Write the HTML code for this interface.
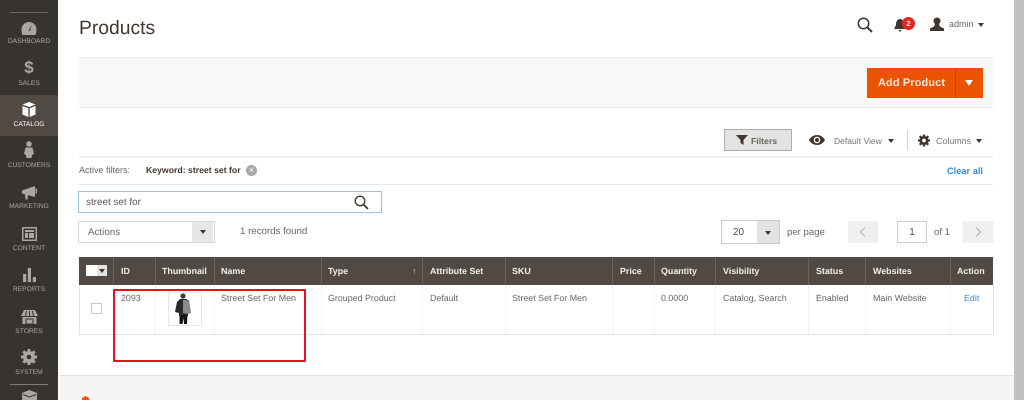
<!DOCTYPE html>
<html><head><meta charset="utf-8"><style>
html,body{margin:0;padding:0;background:#fff}
#p{position:relative;width:1024px;height:400px;overflow:hidden;background:#fff;font-family:"Liberation Sans",sans-serif;color:#41362f;text-rendering:geometricPrecision}
#p div,#p span,#p svg{position:absolute}
.t{white-space:nowrap;font-size:9px;line-height:12px;color:#514943}
.n{width:58px;left:0;text-align:center;font-size:6.7px;line-height:10px;color:#aaa6a0;white-space:nowrap}
.h{white-space:nowrap;font-size:8.9px;line-height:12px;font-weight:bold;color:#f1efec;top:265px}
.c{white-space:nowrap;font-size:8.9px;line-height:12px;color:#6b6560;top:292px}
.sep{top:257px;width:1px;height:28px;background:#6e6259}
.cs{top:285px;width:1px;height:49px;background:#f1f1f1}
.tri{width:0;height:0;border-left:3px solid transparent;border-right:3px solid transparent;border-top:4px solid #41362f}
</style></head><body><div id="p">
<!-- sidebar -->
<div style="left:0;top:0;width:58px;height:400px;background:#373330"></div>
<div style="left:0;top:95px;width:58px;height:41px;background:#514943"></div>
<div style="left:10px;top:12px;width:38px;height:1px;background:#6b6560"></div>
<div style="left:10px;top:384px;width:38px;height:1px;background:#807a74"></div>
<svg style="left:21px;top:22px" width="16" height="13" viewBox="0 0 16 13"><path d="M8 0A7.5 7.5 0 0 0 .5 8c0 2 .5 3.5 1 5h13c.5-1.500 1-3 1-5A7.500 7.500 0 0 0 8 0z" fill="#aaa6a0"/><path d="M11 3L7.500 8.500 8.800 9.300z" fill="#373330"/></svg>
<div class="n" style="top:37px">DASHBOARD</div>
<div style="left:0;width:58px;top:58px;text-align:center;font-size:17px;line-height:20px;font-weight:bold;color:#aaa6a0">$</div>
<div class="n" style="top:79px">SALES</div>
<svg style="left:22px;top:102px" width="14" height="15" viewBox="0 0 14 15"><path d="M7 0l6.500 2.500L7 5 .5 2.500z M.5 4L6.300 6.300V15L.5 12.500z M13.500 4L7.700 6.300V15l5.800-2.500z" fill="#fff"/></svg>
<div class="n" style="top:120px;color:#fff">CATALOG</div>
<svg style="left:24px;top:141px" width="10" height="17" viewBox="0 0 10 17"><circle cx="5" cy="3" r="2.800" fill="#aaa6a0"/><path d="M1.500 6.500h7L10 13l-2 1-.5 3h-5L2 14l-2-1z" fill="#aaa6a0"/></svg>
<div class="n" style="top:161px">CUSTOMERS</div>
<svg style="left:22px;top:186px" width="15" height="14" viewBox="0 0 15 14"><path d="M0 4.500L13 0v11L0 7.500z M3 8l3 1-.5 4.500H3.500z M13.500 2.500H15v5h-1.500z" fill="#aaa6a0"/></svg>
<div class="n" style="top:202px">MARKETING</div>
<svg style="left:22px;top:227px" width="15" height="14" viewBox="0 0 15 14"><path d="M0 0h15v14H0z M1.500 1.500v11h12v-11z M3 3h9v2H3z M3 6h3v5H3z M7 6h5v5H7z" fill="#aaa6a0" fill-rule="evenodd"/></svg>
<div class="n" style="top:244px">CONTENT</div>
<svg style="left:23px;top:268px" width="13" height="14" viewBox="0 0 13 14"><path d="M0 6h3.200v8H0z M4.800 0H8v14H4.800z M9.800 9H13v5H9.800z" fill="#aaa6a0"/></svg>
<div class="n" style="top:285px">REPORTS</div>
<svg style="left:21px;top:310px" width="17" height="14" viewBox="0 0 17 14"><path d="M3 0h11l3 6H0z M1.500 7h14v7h-14z" fill="#aaa6a0"/><path d="M5.500 1L4.500 6 M8.500 1v5 M11.500 1l1 5 M5 9h7v5H5z" stroke="#373330" fill="none"/></svg>
<div class="n" style="top:327px">STORES</div>
<svg style="left:21px;top:349px" width="16" height="16" viewBox="0 0 16 16"><circle cx="8" cy="8" r="4.500" fill="none" stroke="#aaa6a0" stroke-width="3"/><path d="M8 0v16M0 8h16M2.300 2.300l11.400 11.400M13.700 2.300L2.300 13.700" stroke="#aaa6a0" stroke-width="3"/><circle cx="8" cy="8" r="2.300" fill="#373330"/></svg>
<div class="n" style="top:368px">SYSTEM</div>
<svg style="left:22px;top:390px" width="15" height="10" viewBox="0 0 15 10"><path d="M7.500 0L15 3v7H0V3z" fill="#aaa6a0"/><path d="M1 4.500l6.500 2.500L14 4.500" stroke="#373330" fill="none"/></svg>

<!-- header -->
<div class="t" style="left:79px;top:16px;font-size:19.3px;line-height:26px;color:#41362f">Products</div>
<svg style="left:857px;top:17px" width="16" height="16" viewBox="0 0 16 16"><circle cx="6.500" cy="6.500" r="5.200" fill="none" stroke="#41362f" stroke-width="1.500"/><path d="M10.300 10.300L15 15" stroke="#41362f" stroke-width="2"/></svg>
<svg style="left:894px;top:19px" width="12" height="13" viewBox="0 0 12 13"><path d="M6 0C3 0 2 3 2 6L0 10h12L10 6c0-3-1-6-4-6z M4.500 11h3L6 13z" fill="#41362f"/></svg>
<div style="left:902px;top:17px;width:13px;height:13px;border-radius:50%;background:#e22626;color:#fff;font-size:7.500px;font-weight:bold;line-height:13px;text-align:center">2</div>
<svg style="left:930px;top:17px" width="14" height="14" viewBox="0 0 14 14"><circle cx="7" cy="4" r="3.500" fill="#41362f"/><path d="M5 7h4l1 2.500 4 2V14H0v-2.500l4-2z" fill="#41362f"/></svg>
<div class="t" style="left:949px;top:18px;color:#6b6560;font-size:9px">admin</div>
<div class="tri" style="left:978px;top:23px"></div>

<!-- action bar -->
<div style="left:79px;top:57px;width:914px;height:49px;background:#f8f8f8;border-top:1px solid #ececec;border-bottom:1px solid #ececec"></div>
<div style="left:867px;top:68px;width:116px;height:30px;background:#eb5202"></div>
<div style="left:955px;top:68px;width:1px;height:30px;background:#c74400"></div>
<div class="t" style="left:878px;top:76px;font-size:11px;line-height:14px;font-weight:bold;letter-spacing:.1px;color:#fbe9dc">Add Product</div>
<div style="left:965px;top:80px;width:0;height:0;border-left:4px solid transparent;border-right:4px solid transparent;border-top:6px solid #fff"></div>

<!-- filters row -->
<div style="left:724px;top:129px;width:66px;height:20px;background:#e3e3e3;border:1px solid #adadad"></div>
<svg style="left:736px;top:135px" width="12" height="10" viewBox="0 0 12 10"><path d="M0 0h12L7.500 5v5L4.500 8V5z" fill="#41362f"/></svg>
<div class="t" style="left:751px;top:135px;font-size:8.7px;font-weight:bold;color:#6b6560">Filters</div>
<svg style="left:809px;top:134px" width="16" height="12" viewBox="0 0 16 12"><path d="M0 6C2 2.500 5 1 8 1s6 1.500 8 5c-2 3.500-5 5-8 5S2 9.500 0 6z" fill="#41362f"/><circle cx="8" cy="6" r="3.300" fill="#fff"/><circle cx="8" cy="6" r="2" fill="#41362f"/></svg>
<div class="t" style="left:834px;top:135px;font-size:8.55px;color:#77716c">Default View</div>
<div class="tri" style="left:888px;top:139px"></div>
<div style="left:907px;top:130px;width:1px;height:20px;background:#d5d5d5"></div>
<svg style="left:918px;top:134px" width="12" height="13" viewBox="0 0 16 16"><circle cx="8" cy="8" r="4.500" fill="none" stroke="#41362f" stroke-width="3"/><path d="M8 0v16M0 8h16M2.300 2.300l11.400 11.400M13.700 2.300L2.300 13.700" stroke="#41362f" stroke-width="3"/><circle cx="8" cy="8" r="2.500" fill="#fff"/></svg>
<div class="t" style="left:936px;top:135px;font-size:8.9px;color:#77716c">Columns</div>
<div class="tri" style="left:976px;top:139px"></div>

<!-- active filters -->
<div style="left:79px;top:156px;width:914px;height:2px;background:#efefef"></div>
<div class="t" style="left:79px;top:164px;font-size:9px;color:#6b6560">Active filters:</div>
<div class="t" style="left:146px;top:164px;font-size:8.7px;font-weight:bold;color:#41362f">Keyword: street set for</div>
<div style="left:246px;top:165px;width:11px;height:11px;border-radius:50%;background:#a8a8a8;color:#fff;font-size:9px;line-height:11px;text-align:center">×</div>
<div class="t" style="left:947px;top:165px;font-size:9.25px;font-weight:bold;color:#3c8ccf">Clear all</div>
<div style="left:79px;top:184px;width:914px;height:1px;background:#e6e6e6"></div>

<!-- search -->
<div style="left:78px;top:191px;width:302px;height:20px;border:1px solid #9cc4e0;box-shadow:0 0 1px #cfe3f2;background:#fff"></div>
<div class="t" style="left:86px;top:196px;font-size:9.9px;line-height:13px;color:#5f5954">street set for</div>
<svg style="left:354px;top:195px" width="15" height="15" viewBox="0 0 15 15"><circle cx="6" cy="6" r="4.800" fill="none" stroke="#41362f" stroke-width="1.300"/><path d="M9.500 9.500L14 14" stroke="#41362f" stroke-width="1.800"/></svg>

<!-- actions -->
<div style="left:78px;top:221px;width:135px;height:20px;border:1px solid #d5d5d5;background:#fff"></div>
<div style="left:192px;top:222px;width:21px;height:20px;background:#e6e6e6"></div>
<div class="tri" style="left:200px;top:230px"></div>
<div class="t" style="left:88px;top:225px;font-size:9.8px;color:#6b6560;line-height:13px;margin-top:1px">Actions</div>
<div class="t" style="left:240px;top:225px;font-size:9.7px;color:#6b6560;line-height:13px;margin-top:0">1 records found</div>

<!-- pagination -->
<div style="left:721px;top:220px;width:57px;height:22px;border:1px solid #ccc;background:#fff"></div>
<div style="left:757px;top:221px;width:22px;height:22px;background:#e3e3e3"></div>
<div class="t" style="left:733px;top:227px;font-size:10px;color:#514943">20</div>
<div class="tri" style="left:765px;top:231px"></div>
<div class="t" style="left:787px;top:227px;font-size:9.6px;color:#6b6560">per page</div>
<div style="left:848px;top:221px;width:30px;height:22px;background:#efefef"></div>
<svg style="left:859px;top:227px" width="7" height="10" viewBox="0 0 7 10"><path d="M6 .5L1.500 5 6 9.500" fill="none" stroke="#b5b5b5" stroke-width="1.200"/></svg>
<div style="left:897px;top:221px;width:28px;height:20px;border:1px solid #ccc;background:#fff;font-size:10px;line-height:21px;text-align:center;color:#514943">1</div>
<div class="t" style="left:934px;top:227px;font-size:9.6px;color:#6b6560">of 1</div>
<div style="left:963px;top:221px;width:30px;height:22px;background:#efefef"></div>
<svg style="left:975px;top:227px" width="7" height="10" viewBox="0 0 7 10"><path d="M1 .5L5.500 5 1 9.500" fill="none" stroke="#b5b5b5" stroke-width="1.200"/></svg>

<!-- table head -->
<div style="left:79px;top:257px;width:914px;height:28px;background:#514943"></div>
<div style="left:86px;top:265px;width:11px;height:11px;background:#fff"></div>
<div style="left:97px;top:265px;width:10px;height:11px;background:#e3e3e3"></div>
<div class="tri" style="left:99px;top:269px"></div>
<span class="sep" style="left:113px"></span><span class="sep" style="left:155px"></span><span class="sep" style="left:214px"></span><span class="sep" style="left:321px"></span><span class="sep" style="left:422px"></span><span class="sep" style="left:505px"></span><span class="sep" style="left:612px"></span><span class="sep" style="left:654px"></span><span class="sep" style="left:715px"></span><span class="sep" style="left:808px"></span><span class="sep" style="left:865px"></span><span class="sep" style="left:950px"></span>
<div class="h" style="left:121px">ID</div>
<div class="h" style="left:162px">Thumbnail</div>
<div class="h" style="left:221px">Name</div>
<div class="h" style="left:328px">Type</div>
<div class="h" style="left:412px;font-weight:normal;color:#cfcac5">↑</div>
<div class="h" style="left:430px">Attribute Set</div>
<div class="h" style="left:512px">SKU</div>
<div class="h" style="left:620px">Price</div>
<div class="h" style="left:661px">Quantity</div>
<div class="h" style="left:723px">Visibility</div>
<div class="h" style="left:816px">Status</div>
<div class="h" style="left:873px">Websites</div>
<div class="h" style="left:957px">Action</div>

<!-- table row -->
<div style="left:79px;top:285px;width:913px;height:49px;border-left:1px solid #e3e3e3;border-right:1px solid #e3e3e3;border-bottom:1px solid #e3e3e3"></div>
<span class="cs" style="left:113px"></span><span class="cs" style="left:155px"></span><span class="cs" style="left:214px"></span><span class="cs" style="left:321px"></span><span class="cs" style="left:422px"></span><span class="cs" style="left:505px"></span><span class="cs" style="left:612px"></span><span class="cs" style="left:654px"></span><span class="cs" style="left:715px"></span><span class="cs" style="left:808px"></span><span class="cs" style="left:865px"></span><span class="cs" style="left:950px"></span>
<div style="left:91px;top:303px;width:9px;height:9px;border:1px solid #c8c8c8;background:#fff"></div>
<div class="c" style="left:121px">2093</div>
<div style="left:168px;top:292px;width:32px;height:32px;border:1px solid #e6e6e6;background:#fff"></div>
<svg style="left:175px;top:293px" width="16" height="31" viewBox="0 0 16 31"><circle cx="8" cy="3" r="2.600" fill="#4a3a32"/><path d="M5 6h6l3 2 2 12-3 1v2H4v-3l-4-1L2 9z" fill="#2b2b2d"/><path d="M8 7h3l3 2 2 11-3 1-5-1z" fill="#8c8c8e"/><path d="M4.500 22h8l-.5 9H9L8.500 25 7.500 31h-3z" fill="#151515"/></svg>
<div class="c" style="left:221px">Street Set For Men</div>
<div class="c" style="left:328px">Grouped Product</div>
<div class="c" style="left:430px">Default</div>
<div class="c" style="left:512px">Street Set For Men</div>
<div class="c" style="left:661px">0.0000</div>
<div class="c" style="left:723px">Catalog, Search</div>
<div class="c" style="left:816px">Enabled</div>
<div class="c" style="left:873px">Main Website</div>
<div class="c" style="left:964px;color:#3c8ccf">Edit</div>

<!-- red annotation -->
<div style="left:113px;top:289px;width:189px;height:69px;border:2px solid #e8111c;border-radius:1px"></div>

<!-- footer -->
<div style="left:59px;top:375px;width:955px;height:25px;background:#f5f5f5;border-top:1px solid #e3e3e3"></div>
<svg style="left:82px;top:396px" width="7" height="4" viewBox="0 0 7 4"><path d="M3.500 0L7 2v2H0V2z" fill="#eb5202"/></svg>

<!-- scrollbar -->
<div style="left:1014px;top:0;width:10px;height:400px;background:#c1c1c1"></div>
</div></body></html>
